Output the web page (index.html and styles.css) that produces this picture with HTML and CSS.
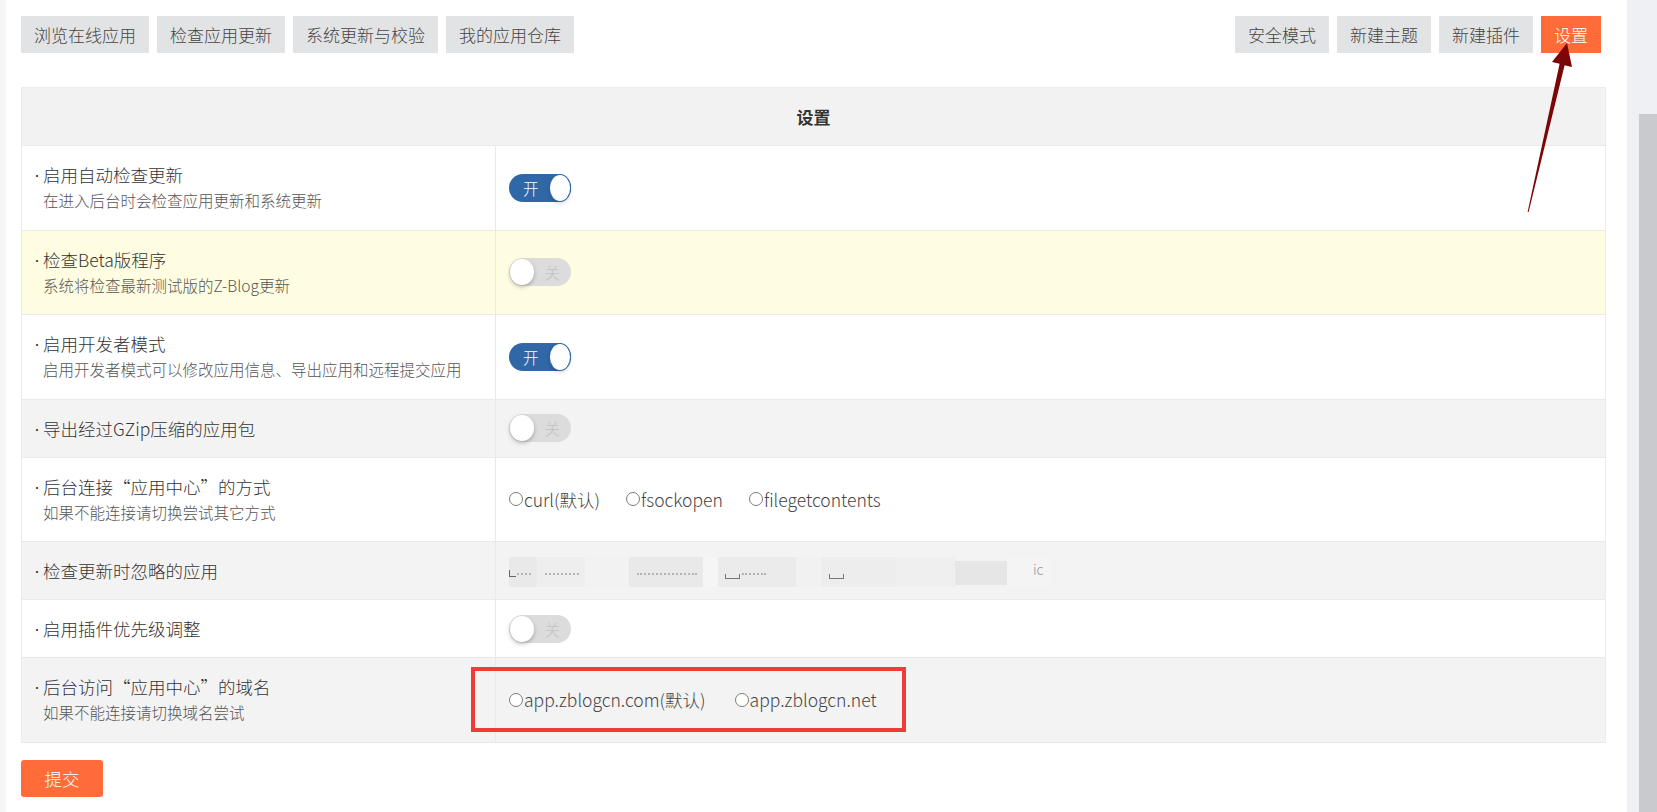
FILE: index.html
```html
<!DOCTYPE html>
<html lang="zh-CN">
<head>
    <meta charset="UTF-8">
    <title>设置</title>
    <link rel="stylesheet" href="styles.css">
</head>
<body>
    <div class="page">
        <div class="content">
            <div class="toolbar">
                <div class="btn-group">
                    <a class="btn">浏览在线应用</a>
                    <a class="btn">检查应用更新</a>
                    <a class="btn">系统更新与校验</a>
                    <a class="btn">我的应用仓库</a>
                </div>
                <div class="btn-group">
                    <a class="btn">安全模式</a>
                    <a class="btn">新建主题</a>
                    <a class="btn">新建插件</a>
                    <a class="btn btn-active">设置</a>
                </div>
            </div>

            <div class="settings">
                <div class="settings-head">设置</div>

                <div class="row">
                    <div class="label">
                        <div class="title"><span class="bullet">·</span>启用自动检查更新</div>
                        <div class="desc">在进入后台时会检查应用更新和系统更新</div>
                    </div>
                    <div class="value"><span class="switch on"><span class="switch-text">开</span><span class="knob"></span></span></div>
                </div>

                <div class="row row-yellow">
                    <div class="label">
                        <div class="title"><span class="bullet">·</span>检查Beta版程序</div>
                        <div class="desc">系统将检查最新测试版的Z-Blog更新</div>
                    </div>
                    <div class="value"><span class="switch"><span class="knob"></span><span class="switch-text">关</span></span></div>
                </div>

                <div class="row">
                    <div class="label">
                        <div class="title"><span class="bullet">·</span>启用开发者模式</div>
                        <div class="desc">启用开发者模式可以修改应用信息、导出应用和远程提交应用</div>
                    </div>
                    <div class="value"><span class="switch on"><span class="switch-text">开</span><span class="knob"></span></span></div>
                </div>

                <div class="row row-gray">
                    <div class="label">
                        <div class="title"><span class="bullet">·</span>导出经过GZip压缩的应用包</div>
                    </div>
                    <div class="value"><span class="switch"><span class="knob"></span><span class="switch-text">关</span></span></div>
                </div>

                <div class="row">
                    <div class="label">
                        <div class="title"><span class="bullet">·</span>后台连接“应用中心”的方式</div>
                        <div class="desc">如果不能连接请切换尝试其它方式</div>
                    </div>
                    <div class="value radios">
                        <label class="radio"><span class="dot"></span>curl(默认)</label>
                        <label class="radio"><span class="dot"></span>fsockopen</label>
                        <label class="radio"><span class="dot"></span>filegetcontents</label>
                    </div>
                </div>

                <div class="row row-gray">
                    <div class="label">
                        <div class="title"><span class="bullet">·</span>检查更新时忽略的应用</div>
                    </div>
                    <div class="value">
                        <div class="mosaic">
                            <span class="tile t1"><i class="corner"></i><i class="dash"></i></span>
                            <span class="tile t2"><i class="dash"></i></span>
                            <span class="tile t3"></span>
                            <span class="tile t4"><i class="dash"></i></span>
                            <span class="tile t5"></span>
                            <span class="tile t6"><i class="box-edge"></i><i class="dash short"></i></span>
                            <span class="tile t7"></span>
                            <span class="tile t8"><i class="box-edge"></i></span>
                            <span class="tile t9"></span>
                            <span class="tile t10"></span>
                            <span class="tile t11"><i class="frag">ic</i></span>
                        </div>
                    </div>
                </div>

                <div class="row">
                    <div class="label">
                        <div class="title"><span class="bullet">·</span>启用插件优先级调整</div>
                    </div>
                    <div class="value"><span class="switch"><span class="knob"></span><span class="switch-text">关</span></span></div>
                </div>

                <div class="row row-gray row-mark">
                    <div class="label">
                        <div class="title"><span class="bullet">·</span>后台访问“应用中心”的域名</div>
                        <div class="desc">如果不能连接请切换域名尝试</div>
                    </div>
                    <div class="value radios radios-wide">
                        <label class="radio"><span class="dot"></span>app.zblogcn.com(默认)</label>
                        <label class="radio"><span class="dot"></span>app.zblogcn.net</label>
                    </div>
                    <div class="mark-box"></div>
                </div>
            </div>

            <button class="submit">提交</button>
        </div>
        <div class="rail"><div class="thumb"></div></div>
    </div>

    <svg class="arrow" width="1657" height="812" viewBox="0 0 1657 812">
        <polygon points="1567,43 1572,67 1564.6,65.2 1528.6,212 1527.6,212 1559.6,63.8 1552,62" fill="#7a0606"/>
    </svg>
</body>
</html>
```

FILE: styles.css
```css
body {
    margin: 0;
    height: 812px;
    overflow: hidden;
    font-family: "Noto Sans CJK SC", "Noto Sans", sans-serif;
    font-weight: 300;
    color: #333;
    background: #fff;
    position: relative;
}
.page {
    display: flex;
    height: 812px;
}
.content {
    flex: 1;
    border-left: 6px solid #f6f6f7;
    padding: 16px 21px 0 15px;
}
.rail {
    width: 30px;
    background: #eef0f4;
    display: flex;
    flex-direction: column;
    align-items: flex-end;
}
.thumb {
    margin-top: 114px;
    width: 18px;
    flex: 1;
    background: #c9cacd;
}
.toolbar {
    display: flex;
    justify-content: space-between;
    padding-right: 5px;
}
.btn-group {
    display: flex;
    gap: 8px;
}
.btn {
    display: block;
    height: 37px;
    line-height: 37px;
    padding: 0 13px;
    font-size: 17px;
    color: #444;
    background: #e2e3e4;
    cursor: pointer;
}
.btn-active {
    background: #ff6c3a;
    color: #fff;
}
.settings {
    margin-top: 34px;
    border: 1px solid #ececec;
    border-bottom: 0;
}
.settings-head {
    background: #f2f2f2;
    text-align: center;
    font-weight: bold;
    font-size: 17px;
    height: 57px;
    line-height: 57px;
    border-bottom: 1px solid #e9e9e9;
}
.row {
    display: grid;
    grid-template-columns: 474px 1fr;
    border-bottom: 1px solid #e9e9e9;
}
.row-yellow {
    background: #fffde1;
}
.row-gray {
    background: #f3f3f3;
}
.label {
    padding: 16px 12px;
    border-right: 1px solid #e9e9e9;
}
.title {
    display: flex;
    align-items: center;
    height: 25px;
    font-size: 17.5px;
}
.bullet {
    width: 9px;
    font-family: "Liberation Sans", sans-serif;
    font-size: 18px;
    position: relative;
    top: 1px;
}
.desc {
    height: 26.5px;
    font-size: 15.5px;
    line-height: 26.5px;
    color: #555;
    padding-left: 9px;
}
.value {
    display: flex;
    align-items: center;
    padding-left: 13px;
}
.switch {
    position: relative;
    display: flex;
    align-items: center;
    justify-content: space-between;
    width: 62px;
    height: 28px;
    border-radius: 14px;
    background: #dcdcdc;
    box-sizing: border-box;
    padding: 0 1px;
}
.switch .knob {
    width: 26px;
    height: 26px;
    border-radius: 50%;
    background: #fff;
    box-shadow: 0 2px 4px rgba(0, 0, 0, 0.25);
}
.switch-text {
    font-size: 15.5px;
    color: #c2c2c2;
    padding: 0 10px;
}
.switch.on {
    background: #3067a6;
}
.switch.on .switch-text {
    color: #fff;
    padding: 0 11px 0 13px;
}
.switch.on .knob {
    box-shadow: 0 0 0 1px #3067a6, 0 2px 4px rgba(0, 0, 0, 0.2);
}
.radios {
    gap: 26px;
    font-size: 17.5px;
    color: #444;
}
.radios-wide {
    gap: 29px;
}
.radio {
    display: flex;
    align-items: center;
}
.dot {
    width: 12px;
    height: 12px;
    border: 1.5px solid #7c7c7c;
    border-radius: 50%;
    background: #fff;
    margin-right: 1px;
}
.mosaic {
    display: flex;
    height: 30px;
    margin-top: 2px;
}
.tile {
    position: relative;
    height: 30px;
}
.t1 { width: 28px; background: #e9e9e9; }
.t2 { width: 48px; background: #eeeeee; }
.t3 { width: 44px; background: #f2f2f2; }
.t4 { width: 74px; background: #e9e9e9; }
.t5 { width: 15px; background: #f5f5f5; }
.t6 { width: 78px; background: #ebebeb; }
.t7 { width: 26px; background: #f1f1f1; }
.t8 { width: 74px; background: #ededed; }
.t9 { width: 59px; background: #efefef; }
.t10 { width: 52px; background: #e6e6e6; height: 24px; margin-top: 4px; }
.t11 { width: 44px; background: #f4f4f4; }
.corner {
    position: absolute;
    left: 0;
    top: 13px;
    width: 6px;
    height: 6px;
    border-left: 1.5px solid #666;
    border-bottom: 1.5px solid #666;
}
.dash {
    position: absolute;
    left: 8px;
    right: 6px;
    top: 16px;
    border-top: 2px dotted #b4b4b4;
}
.dash.short {
    left: 24px;
    right: 30px;
}
.box-edge {
    position: absolute;
    left: 7px;
    top: 17px;
    width: 13px;
    height: 4px;
    border: 1.5px solid #777;
    border-top: 0;
}
.frag {
    position: absolute;
    left: 26px;
    top: 2px;
    font-style: normal;
    font-size: 14px;
    color: #999;
}
.row-mark {
    position: relative;
}
.mark-box {
    position: absolute;
    left: 449px;
    top: 9px;
    width: 427px;
    height: 57px;
    border: 4px solid #f03b3b;
}
.submit {
    margin-top: 17px;
    width: 82px;
    height: 37px;
    border: 0;
    border-radius: 3px;
    background: #ff6c3a;
    color: #fff;
    font-family: inherit;
    font-weight: 300;
    font-size: 17.5px;
    cursor: pointer;
}
.arrow {
    position: absolute;
    left: 0;
    top: 0;
    pointer-events: none;
}
```
